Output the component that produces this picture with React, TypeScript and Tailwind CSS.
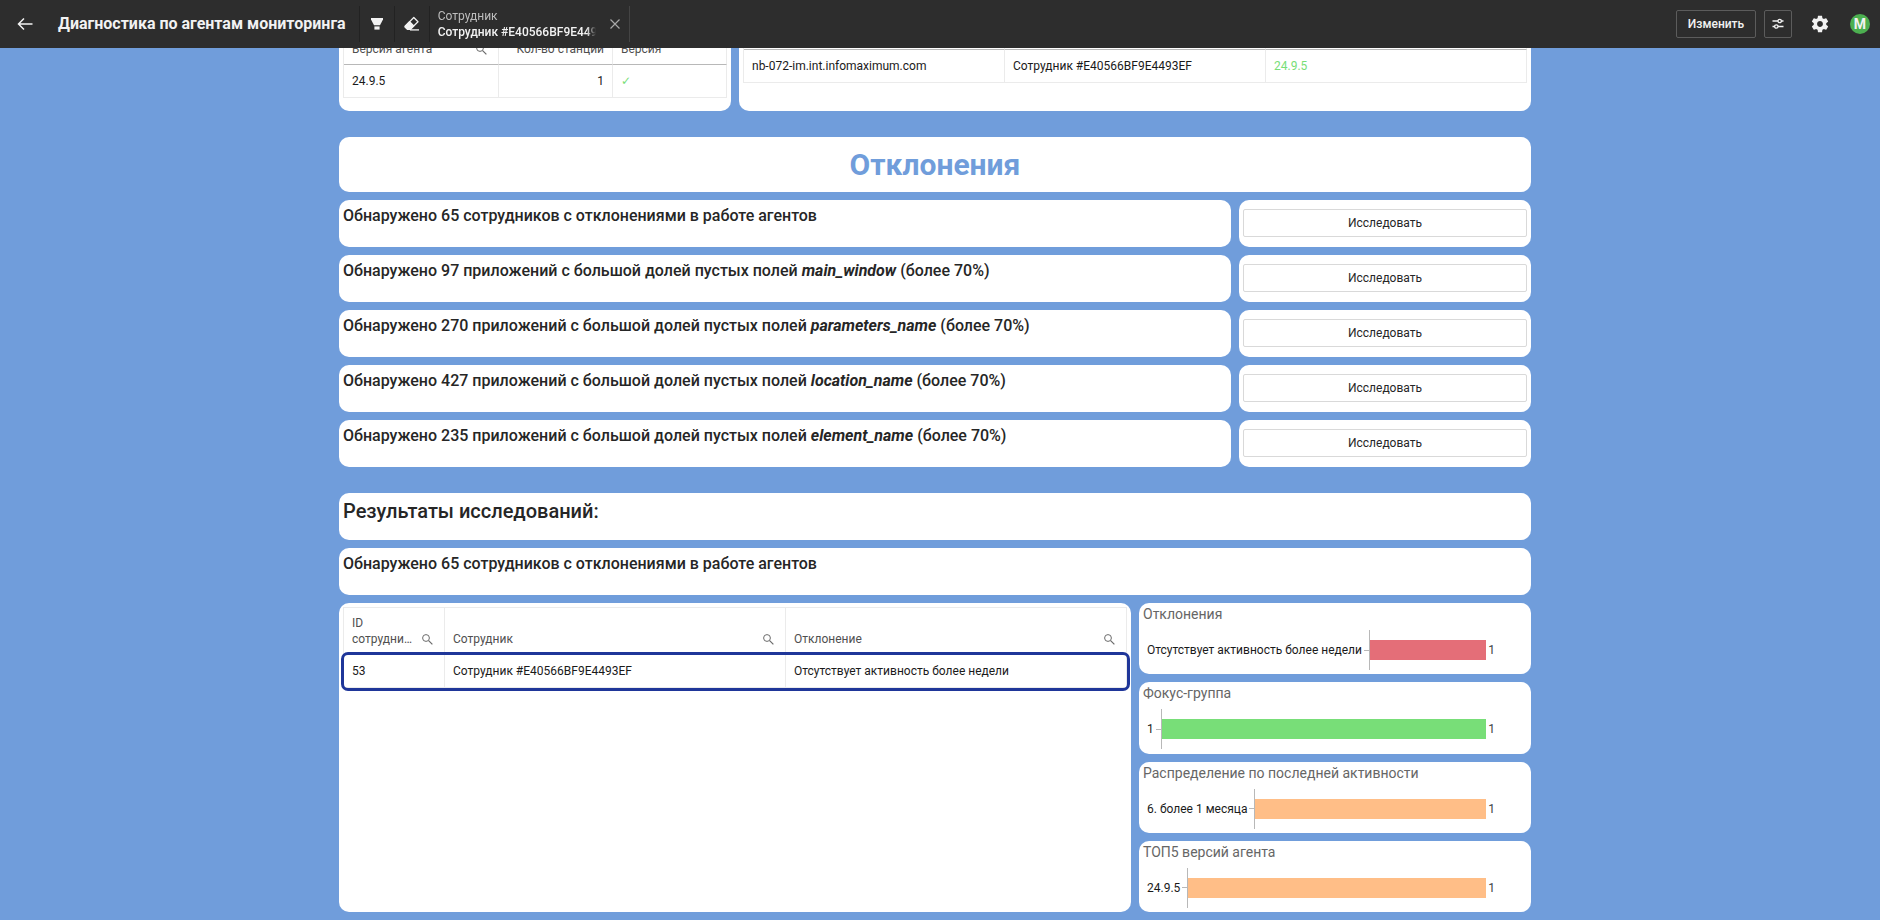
import React, { useLayoutEffect, useRef } from 'react';
import clsx from 'clsx';

const deviations = [
  { count: '65 сотрудников с отклонениями в работе агентов' },
  { count: '97 приложений с большой долей пустых полей', field: 'main_window' },
  { count: '270 приложений с большой долей пустых полей', field: 'parameters_name' },
  { count: '427 приложений с большой долей пустых полей', field: 'location_name' },
  { count: '235 приложений с большой долей пустых полей', field: 'element_name' },
];

const charts = [
  { title: 'Отклонения', label: 'Отсутствует активность более недели', value: 1, color: 'bg-[#e46e78]' },
  { title: 'Фокус-группа', label: '1', value: 1, color: 'bg-[#78de78]' },
  { title: 'Распределение по последней активности', label: '6. более 1 месяца', value: 1, color: 'bg-[#ffbe87]' },
  { title: 'ТОП5 версий агента', label: '24.9.5', value: 1, color: 'bg-[#ffbe87]' },
];

function Card({ className, children }: { className?: string; children: React.ReactNode }) {
  return <div className={clsx('rounded-[10px] bg-white px-1 pb-1', className)}>{children}</div>;
}

function SearchButton({ label }: { label: string }) {
  return (
    <button type="button" aria-label={label} className="mr-[11px] mb-[2px] ml-[10px] shrink-0 text-[#6b6b6b]">
      <svg width="11" height="11" viewBox="0 0 11 11" fill="none" stroke="currentColor">
        <circle cx="4" cy="4" r="3.4" />
        <path d="M6.6 6.6L10.4 10.4" strokeWidth="1.2" />
      </svg>
    </button>
  );
}

function HeadCell({ children, search, right }: { children?: React.ReactNode; search?: string; right?: boolean }) {
  return (
    <th className="border-r border-b border-r-[#ebebeb] border-b-[#b8b8b8] py-[7px] pl-2 text-left align-bottom font-normal text-[#4f4f4f]">
      <div className="flex min-h-4 items-end">
        <div className={clsx('min-w-0 flex-1', right && 'pr-2 text-right')}>{children}</div>
        {search && <SearchButton label={search} />}
      </div>
    </th>
  );
}

function Cell({ className, children }: { className?: string; children: React.ReactNode }) {
  return <td className={clsx('border-r border-b border-[#ebebeb] px-2 py-2', className)}>{children}</td>;
}

const tableClass =
  'w-full table-fixed border-separate border-spacing-0 border-t border-l border-[#ebebeb] text-xs text-[#1a1a1a]';

function BarChart({ title, label, value, color }: (typeof charts)[number]) {
  return (
    <Card className="flex-1 pt-1">
      <h3 className="text-sm leading-[14px] text-[#666666]">{title}</h3>
      <div className="mt-[9px] flex h-10 items-center pr-8 pl-1 text-xs text-[#1a1a1a]">
        <span className="mr-[2px]">{label}</span>
        <span className="h-px w-[5px] bg-[#b8b8b8]" />
        <span className="h-10 w-px bg-[#b8b8b8]" />
        <span className={clsx('h-5 flex-1', color)} />
        <span className="ml-[2px] text-[#404040]">{value}</span>
      </div>
    </Card>
  );
}

function Header() {
  return (
    <header className="flex h-12 shrink-0 items-center bg-[#2d2d2d] pr-[10px] text-[#f2f2f2]">
      <button type="button" aria-label="Назад" className="ml-[17px]">
        <svg width="16" height="16" viewBox="0 0 16 16" fill="none" stroke="currentColor" strokeWidth="1.5">
          <path d="M15.5 8H2M7 2.5L1.5 8L7 13.5" />
        </svg>
      </button>
      <h1 className="ml-[25px] text-base font-bold whitespace-nowrap">Диагностика по агентам мониторинга</h1>
      <button type="button" aria-label="Фильтры" className="ml-[13px] flex h-9 w-[35px] items-center justify-center border-l border-[#222222]">
        <svg width="12" height="12" viewBox="0 0 12 12" fill="currentColor">
          <path d="M0 0H12V1.5L9 7.2H3L0 1.500Z" />
          <path d="M3.400 8.400H8.600V11.600H3.400Z" />
        </svg>
      </button>
      <button type="button" aria-label="Очистить" className="flex h-9 w-[35px] items-center justify-center border-l border-[#222222]">
        <svg width="16" height="16" viewBox="0 0 16 16" fill="none" stroke="currentColor" strokeWidth="1.3" strokeLinejoin="round">
          <path d="M9.800 1.500L14 5.700L6.300 13.400H3.600L1.200 11V10.100Z" />
          <path d="M5.600 5.700L9.800 9.900L6.300 13.400H3.600L1.200 11V10.100Z" fill="currentColor" />
          <path d="M6 13.900H15" />
        </svg>
      </button>
      <div className="flex h-9 w-[201px] items-center border-x border-l-[#222222] border-r-[#444444] pl-2 text-xs">
        <div className="w-[158px] overflow-hidden mask-r-from-94% whitespace-nowrap">
          <div className="text-[#bdbdbd]">Сотрудник</div>
          <div className="font-medium">Сотрудник #E40566BF9E4493EF</div>
        </div>
        <button type="button" aria-label="Сбросить фильтр" className="ml-[14px] text-[#a8a8a8]">
          <svg width="10" height="10" viewBox="0 0 10 10" fill="none" stroke="currentColor" strokeWidth="1.2">
            <path d="M0.5 0.5L9.5 9.5M9.5 0.5L0.5 9.5" />
          </svg>
        </button>
      </div>
      <div className="ml-auto flex items-center">
        <button type="button" className="h-7 w-20 rounded-xs border border-[#5c5c5c] text-xs font-medium">
          Изменить
        </button>
        <button type="button" aria-label="Параметры" className="ml-2 flex size-7 items-center justify-center rounded-xs border border-[#5c5c5c]">
          <svg width="12" height="12" viewBox="0 0 12 12" fill="none" stroke="currentColor" strokeWidth="1.3">
            <path d="M0.500 3H6M9.500 3H11.500M0.500 8.500H2.500M6 8.500H11.500" />
            <circle cx="7.700" cy="3" r="1.700" />
            <circle cx="4.300" cy="8.500" r="1.700" />
          </svg>
        </button>
        <button type="button" aria-label="Настройки" className="ml-[18px]">
          <svg width="20" height="20" viewBox="0 0 24 24" fill="currentColor">
            <path d="M19.430 12.980c.04-.32.07-.64.07-.98s-.03-.66-.07-.98l2.110-1.650c.19-.15.24-.42.12-.64l-2-3.460c-.12-.22-.39-.3-.61-.22l-2.490 1c-.52-.4-1.080-.73-1.690-.98l-.38-2.650C14.460 2.180 14.250 2 14 2h-4c-.25 0-.46.18-.49.42l-.38 2.650c-.61.25-1.170.59-1.690.98l-2.490-1c-.23-.09-.49 0-.61.22l-2 3.460c-.13.22-.07.49.12.64l2.110 1.650c-.04.32-.07.65-.07.98s.03.66.07.98l-2.110 1.650c-.19.15-.24.42-.12.64l2 3.460c.12.22.39.3.61.22l2.490-1c.52.4 1.080.73 1.690.98l.38 2.650c.03.24.24.42.49.42h4c.25 0 .46-.18.49-.42l.38-2.650c.61-.25 1.170-.59 1.690-.98l2.490 1c.23.09.49 0 .61-.22l2-3.460c.12-.22.07-.49-.12-.64l-2.110-1.650zM12 15.500c-1.930 0-3.500-1.570-3.500-3.500s1.570-3.500 3.500-3.500 3.500 1.570 3.500 3.500-1.570 3.500-3.500 3.500z" />
          </svg>
        </button>
        <button type="button" className="ml-5 size-5 rounded-full bg-[#4caf50] text-sm leading-5 font-bold">M</button>
      </div>
    </header>
  );
}

export default function App() {
  const mainRef = useRef<HTMLElement>(null);

  // open on the results, at the end of the dashboard
  useLayoutEffect(() => {
    if (mainRef.current) mainRef.current.scrollTop = mainRef.current.scrollHeight;
  }, []);

  return (
    <div className="flex h-screen flex-col bg-[#709ddb] font-[Roboto,sans-serif] text-[#262626]">
      <Header />
      <main ref={mainRef} className="min-h-0 flex-1 overflow-y-auto pr-[10px] [scrollbar-width:none]">
        <div className="mx-auto max-w-[1192px] pb-2">
          <div className="grid grid-cols-12 gap-2">
            <Card className="col-span-4 min-h-[98px] pt-1">
              <table className={tableClass}>
                <colgroup>
                  <col className="w-[155px]" />
                  <col />
                  <col />
                </colgroup>
                <thead>
                  <tr className="h-[47px]">
                    <HeadCell search="Поиск по версии">Версия агента</HeadCell>
                    <HeadCell right>Кол-во станций</HeadCell>
                    <HeadCell>Версия</HeadCell>
                  </tr>
                </thead>
                <tbody>
                  <tr>
                    <Cell>24.9.5</Cell>
                    <Cell className="text-right">1</Cell>
                    <Cell className="font-['DejaVu_Sans',sans-serif] font-bold text-[#78de78]">✓</Cell>
                  </tr>
                </tbody>
              </table>
            </Card>
            <Card className="col-span-8 pt-1">
              <table className={tableClass}>
                <thead>
                  <tr className="h-8">
                    <HeadCell />
                    <HeadCell />
                    <HeadCell />
                  </tr>
                </thead>
                <tbody>
                  <tr>
                    <Cell>nb-072-im.int.infomaximum.com</Cell>
                    <Cell>Сотрудник #E40566BF9E4493EF</Cell>
                    <Cell className="text-[#78de78]">24.9.5</Cell>
                  </tr>
                </tbody>
              </table>
            </Card>
          </div>

          <Card className="mt-[26px] flex min-h-[55px] items-center justify-center pt-1">
            <h2 className="text-3xl font-bold text-[#709ddb]">Отклонения</h2>
          </Card>

          {deviations.map((item) => (
            <div key={item.count} className="mt-2 grid grid-cols-12 gap-2">
              <Card className="col-span-9 min-h-[47px] pt-1 font-medium">
                Обнаружено {item.count}
                {item.field && (
                  <>
                    {' '}
                    <em className="font-bold">{item.field}</em> (более 70%)
                  </>
                )}
              </Card>
              <Card className="col-span-3 pt-[9px]">
                <button type="button" className="block h-7 w-full rounded-xs border border-[#d9d9d9] text-xs">
                  Исследовать
                </button>
              </Card>
            </div>
          ))}

          <Card className="mt-[26px] min-h-[47px] pt-1">
            <h2 className="text-xl font-medium">Результаты исследований:</h2>
          </Card>
          <Card className="mt-2 min-h-[47px] pt-1 font-medium">Обнаружено 65 сотрудников с отклонениями в работе агентов</Card>

          <div className="mt-2 grid grid-cols-12 gap-2">
            <Card className="col-span-8 min-h-[309px] pt-1">
              <table className={tableClass}>
                <colgroup>
                  <col className="w-[101px]" />
                  <col />
                  <col />
                </colgroup>
                <thead>
                  <tr>
                    <HeadCell search="Поиск по ID">
                      ID
                      <span className="block truncate">сотрудника</span>
                    </HeadCell>
                    <HeadCell search="Поиск по сотруднику">Сотрудник</HeadCell>
                    <HeadCell search="Поиск по отклонению">Отклонение</HeadCell>
                  </tr>
                </thead>
                <tbody>
                  <tr className="rounded-sm outline-3 outline-[#1f3699]">
                    <Cell>53</Cell>
                    <Cell>Сотрудник #E40566BF9E4493EF</Cell>
                    <Cell>Отсутствует активность более недели</Cell>
                  </tr>
                </tbody>
              </table>
            </Card>
            <div className="col-span-4 flex flex-col gap-2">
              {charts.map((chart) => (
                <BarChart key={chart.title} {...chart} />
              ))}
            </div>
          </div>
        </div>
      </main>
    </div>
  );
}
